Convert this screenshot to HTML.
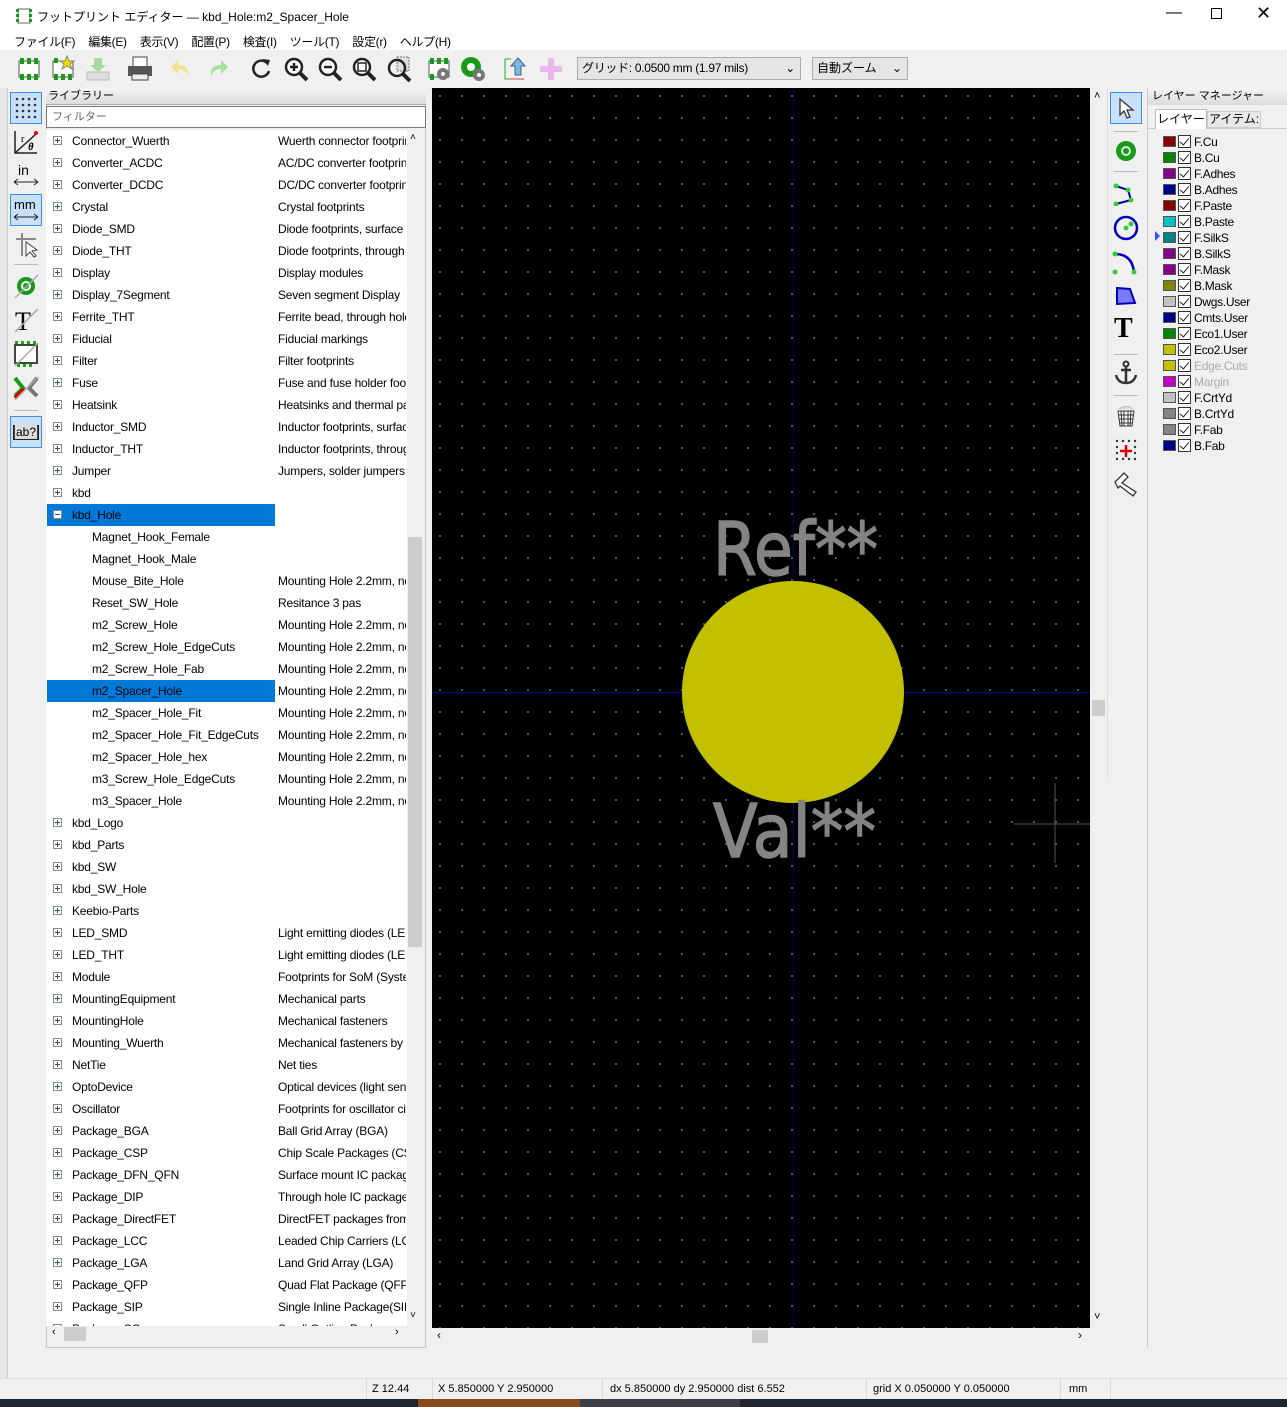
<!DOCTYPE html>
<html><head><meta charset="utf-8">
<style>
*{box-sizing:border-box;margin:0;padding:0}
body{width:1287px;height:1407px;background:#f0f0f0;font-family:"Liberation Sans","Noto Sans CJK JP",sans-serif;font-size:12px;color:#000;position:relative;overflow:hidden}
.abs{position:absolute}
.title{left:0;top:0;width:1287px;height:32px;background:#fff}
.menu{left:0;top:32px;width:1287px;height:18px;background:#fff}
.tb{left:0;top:50px;width:1287px;height:38px;background:#f0f0f0}
.ic{position:absolute;width:28px;height:28px}
.sep{position:absolute;width:1px;height:26px;background:#ccc;top:56px}
.list{left:46px;top:130px;width:362px;height:1196px;background:#fff;overflow:hidden;letter-spacing:-0.2px}
.row{position:relative;height:22px;line-height:22px;white-space:nowrap}
.row .pm{position:absolute;left:7px;top:6px;width:9px;height:9px;border:1px solid #8a8a8a;background:#fff}
.row .pm:before{content:"";position:absolute;left:1px;top:3px;width:5px;height:1px;background:#2a4aa0}
.row .pm.p:after{content:"";position:absolute;left:3px;top:1px;width:1px;height:5px;background:#2a4aa0}
.row .n{position:absolute;left:26px}
.row .c{position:absolute;left:46px}
.row .d{position:absolute;left:232px;width:128px;overflow:hidden}
.sel{position:absolute;left:1px;width:228px;height:22px;background:#0078d7}
.canvas{left:432px;top:88px;width:658px;height:1240px;background-color:#000;background-image:radial-gradient(circle at 1px 1px,#6a6a6a 0.8px,transparent 1.1px);background-size:22px 22px;background-position:7px 7px;overflow:hidden}
.lay{position:absolute;left:1163px;height:16px;line-height:16px;width:120px}
.lay .sw{position:absolute;left:0;top:2px;width:13px;height:11px;border:1px solid #555}
.lay .cb{position:absolute;left:15px;top:1px;width:13px;height:13px;border:1px solid #333;background:#fff}
.lay .cb:after{content:"";position:absolute;left:3px;top:0px;width:4px;height:8px;border-right:1.5px solid #222;border-bottom:1.5px solid #222;transform:rotate(40deg)}
.lay .t{position:absolute;left:31px;font-size:12px;letter-spacing:-0.3px}
.status{left:0;top:1378px;width:1287px;height:21px;background:#f0f0f0;border-top:1px solid #ddd}
.st{position:absolute;top:1383px;font-size:11px}
.vs{position:absolute;top:1379px;width:1px;height:20px;background:#d8d8d8}
</style></head><body>
<div class="abs title">
 <svg class="abs" style="left:16px;top:7px" width="16" height="18"><rect x="2" y="2" width="12" height="14" fill="#fff" stroke="#666"/><g fill="#1a9a1a"><rect x="0" y="2" width="3" height="3"/><rect x="0" y="7" width="3" height="3"/><rect x="0" y="12" width="3" height="3"/><rect x="13" y="2" width="3" height="3"/><rect x="13" y="7" width="3" height="3"/><rect x="13" y="12" width="3" height="3"/></g></svg>
 <div class="abs" style="left:37px;top:8px;font-size:12px">フットプリント エディター — kbd_Hole:m2_Spacer_Hole</div>
 <div class="abs" style="left:1166px;top:4px;font-size:16px">&#8212;</div>
 <div class="abs" style="left:1211px;top:8px;width:11px;height:11px;border:1px solid #000"></div>
 <div class="abs" style="left:1256px;top:3px;font-size:18px">&#x2715;</div>
</div>
<div class="abs menu"><div class="abs" style="left:14px;top:1px;font-size:12px;word-spacing:10px;letter-spacing:-0.3px">ファイル(F) 編集(E) 表示(V) 配置(P) 検査(I) ツール(T) 設定(r) ヘルプ(H)</div></div>
<div class="abs tb">
 <svg class="ic" style="left:15px;top:5px" viewBox="0 0 28 28"><rect x="4" y="6" width="20" height="16" fill="#fff" stroke="#555"/><g fill="#1a9a1a"><rect x="5" y="3" width="4" height="6"/><rect x="12" y="3" width="4" height="6"/><rect x="19" y="3" width="4" height="6"/><rect x="5" y="19" width="4" height="6"/><rect x="12" y="19" width="4" height="6"/><rect x="19" y="19" width="4" height="6"/></g></svg>
 <svg class="ic" style="left:49px;top:5px" viewBox="0 0 28 28"><rect x="4" y="6" width="20" height="16" fill="#fff" stroke="#555"/><g fill="#1a9a1a"><rect x="5" y="19" width="4" height="6"/><rect x="12" y="19" width="4" height="6"/><rect x="19" y="19" width="4" height="6"/><rect x="5" y="3" width="4" height="5"/></g><polygon points="18,1 20,6 25,6 21,9 23,14 18,11 13,14 15,9 11,6 16,6" fill="#f5d800" stroke="#886"/></svg>
 <svg class="ic" style="left:84px;top:5px" viewBox="0 0 28 28"><rect x="3" y="17" width="22" height="8" fill="#ddd" stroke="#bbb"/><polygon points="10,3 18,3 18,10 22,10 14,17 6,10 10,10" fill="#a8d8a0"/></svg>
 <div class="sep" style="left:119px"></div>
 <svg class="ic" style="left:126px;top:5px" viewBox="0 0 28 28"><rect x="7" y="2" width="14" height="10" fill="#fff" stroke="#444"/><rect x="2" y="11" width="24" height="10" fill="#555"/><rect x="6" y="19" width="16" height="6" fill="#eee" stroke="#444"/></svg>
 <div class="sep" style="left:160px"></div>
 <svg class="ic" style="left:168px;top:5px" viewBox="0 0 28 28"><path d="M20 22 Q22 10 10 10 L10 5 L3 12 L10 19 L10 14 Q18 14 20 22Z" fill="#f5e08a"/></svg>
 <svg class="ic" style="left:203px;top:5px" viewBox="0 0 28 28"><path d="M8 22 Q6 10 18 10 L18 5 L25 12 L18 19 L18 14 Q10 14 8 22Z" fill="#a8e0a0"/></svg>
 <div class="sep" style="left:237px"></div>
 <svg class="ic" style="left:247px;top:5px" viewBox="0 0 28 28"><path d="M20 8 A8 8 0 1 0 22 16" fill="none" stroke="#222" stroke-width="2.5"/><polygon points="16,4 23,5 21,11" fill="#222"/></svg>
 <svg class="ic" style="left:282px;top:5px" viewBox="0 0 28 28"><circle cx="12" cy="12" r="8" fill="#fff" stroke="#222" stroke-width="2.5"/><path d="M18 18 L25 25" stroke="#222" stroke-width="4"/><path d="M8 12H16M12 8V16" stroke="#222" stroke-width="2.5"/></svg>
 <svg class="ic" style="left:316px;top:5px" viewBox="0 0 28 28"><circle cx="12" cy="12" r="8" fill="#fff" stroke="#222" stroke-width="2.5"/><path d="M18 18 L25 25" stroke="#222" stroke-width="4"/><path d="M8 12H16" stroke="#222" stroke-width="2.5"/></svg>
 <svg class="ic" style="left:350px;top:5px" viewBox="0 0 28 28"><circle cx="12" cy="12" r="8" fill="#fff" stroke="#222" stroke-width="2.5"/><path d="M18 18 L25 25" stroke="#222" stroke-width="4"/><rect x="8" y="8" width="8" height="8" fill="none" stroke="#222" stroke-width="1.5"/></svg>
 <svg class="ic" style="left:385px;top:5px" viewBox="0 0 28 28"><rect x="12" y="2" width="12" height="14" fill="#ddd" stroke="#777" stroke-dasharray="2 1"/><circle cx="12" cy="13" r="8" fill="none" stroke="#222" stroke-width="2.5"/><path d="M18 19 L25 26" stroke="#222" stroke-width="4"/></svg>
 <div class="sep" style="left:420px"></div>
 <svg class="ic" style="left:425px;top:5px" viewBox="0 0 28 28"><rect x="4" y="6" width="20" height="16" fill="#fff" stroke="#555"/><g fill="#1a9a1a"><rect x="5" y="3" width="4" height="6"/><rect x="12" y="3" width="4" height="6"/><rect x="19" y="3" width="4" height="6"/><rect x="5" y="19" width="4" height="6"/></g><circle cx="18" cy="19" r="6" fill="#777"/><circle cx="18" cy="19" r="2" fill="#fff"/></svg>
 <svg class="ic" style="left:459px;top:5px" viewBox="0 0 28 28"><circle cx="12" cy="12" r="10" fill="#1a9a1a"/><circle cx="12" cy="12" r="4" fill="#fff"/><circle cx="20" cy="20" r="6" fill="#777"/><circle cx="20" cy="20" r="2" fill="#fff"/></svg>
 <div class="sep" style="left:494px"></div>
 <svg class="ic" style="left:502px;top:5px" viewBox="0 0 28 28"><path d="M3 4H9M3 4V24H9" stroke="#2a2" fill="none"/><polygon points="16,3 23,11 19,11 19,20 13,20 13,11 9,11" fill="#7ab8e8" stroke="#468"/><path d="M8 24H22" stroke="#c44"/></svg>
 <svg class="ic" style="left:537px;top:5px" viewBox="0 0 28 28"><path d="M14 3V25M3 14H25" stroke="#e8b8ec" stroke-width="6"/></svg>
 <div class="sep" style="left:570px"></div>
 <div class="abs" style="left:577px;top:7px;width:224px;height:23px;border:1px solid #adadad;background:#e5e5e5;line-height:21px;padding-left:4px;font-size:12px;letter-spacing:-0.3px">グリッド: 0.0500 mm (1.97 mils)<span class="abs" style="right:5px;top:0">&#8964;</span></div>
 <div class="abs" style="left:812px;top:7px;width:96px;height:23px;border:1px solid #adadad;background:#e5e5e5;line-height:21px;padding-left:4px;font-size:12px">自動ズーム<span class="abs" style="right:5px;top:0">&#8964;</span></div>
</div>

<!-- left toolbar -->
<div class="abs" style="left:8px;top:88px;width:36px;height:1290px;background:#f0f0f0"></div>
<div class="abs" style="left:0;top:88px;width:8px;height:1290px;background:#e8e8e8;border-right:1px solid #ccc"></div>
<div class="abs" style="left:10px;top:92px;width:32px;height:32px;background:#c8e0f8;border:1px solid #3a8ee6"></div>
<svg class="abs" style="left:14px;top:96px" width="24" height="24"><g fill="#333"><circle cx="3" cy="3" r="1.3"/><circle cx="9" cy="3" r="1.3"/><circle cx="15" cy="3" r="1.3"/><circle cx="21" cy="3" r="1.3"/><circle cx="3" cy="9" r="1.3"/><circle cx="9" cy="9" r="1.3"/><circle cx="15" cy="9" r="1.3"/><circle cx="21" cy="9" r="1.3"/><circle cx="3" cy="15" r="1.3"/><circle cx="9" cy="15" r="1.3"/><circle cx="15" cy="15" r="1.3"/><circle cx="21" cy="15" r="1.3"/><circle cx="3" cy="21" r="1.3"/><circle cx="9" cy="21" r="1.3"/><circle cx="15" cy="21" r="1.3"/><circle cx="21" cy="21" r="1.3"/></g></svg>
<svg class="abs" style="left:12px;top:128px" width="28" height="28"><path d="M3 3V25H25M3 25L24 6" stroke="#222" fill="none" stroke-width="1.5"/><circle cx="24" cy="5" r="2" fill="#e00"/><text x="9" y="14" font-size="10" font-family="Liberation Serif">r</text><text x="16" y="22" font-size="10" font-style="italic" font-weight="bold">θ</text></svg>
<div class="abs" style="left:18px;top:162px;font-size:14px">in</div>
<svg class="abs" style="left:12px;top:178px" width="28" height="8"><path d="M2 4H26M2 4L6 1M2 4L6 7M26 4L22 1M26 4L22 7" stroke="#222"/></svg>
<div class="abs" style="left:10px;top:194px;width:32px;height:32px;background:#c8e0f8;border:1px solid #3a8ee6"></div>
<div class="abs" style="left:14px;top:197px;font-size:13px">mm</div>
<svg class="abs" style="left:12px;top:213px" width="28" height="8"><path d="M2 4H26M2 4L6 1M2 4L6 7M26 4L22 1M26 4L22 7" stroke="#222"/></svg>
<svg class="abs" style="left:12px;top:230px" width="28" height="28"><path d="M4 9H24M10 3V26" stroke="#888" stroke-width="2"/><path d="M14 12L14 26L18 22L22 27L24 26L20 21L25 20Z" fill="#fff" stroke="#444"/></svg>
<div class="abs" style="left:14px;top:264px;width:24px;height:1px;background:#bbb"></div>
<svg class="abs" style="left:12px;top:272px" width="28" height="28"><circle cx="14" cy="14" r="9" fill="#1a9a1a"/><circle cx="14" cy="14" r="5" fill="#fff"/><circle cx="14" cy="14" r="3" fill="#1a9a1a"/><path d="M3 26L26 3" stroke="#aaa" stroke-width="1.5"/></svg>
<svg class="abs" style="left:12px;top:306px" width="28" height="28"><text x="3" y="24" font-size="26" font-family="Liberation Serif">T</text><path d="M3 26L26 3" stroke="#aaa" stroke-width="1.5"/></svg>
<svg class="abs" style="left:12px;top:340px" width="28" height="28"><rect x="3" y="5" width="22" height="18" fill="#fff" stroke="#444" stroke-width="2"/><g fill="#1a1"><rect x="3" y="1" width="3" height="3"/><rect x="9" y="1" width="3" height="3"/><rect x="15" y="1" width="3" height="3"/><rect x="21" y="1" width="3" height="3"/><rect x="5" y="24" width="3" height="3"/><rect x="11" y="24" width="3" height="3"/><rect x="17" y="24" width="3" height="3"/></g><path d="M3 26L26 3" stroke="#aaa" stroke-width="1.5"/></svg>
<svg class="abs" style="left:12px;top:374px" width="28" height="28"><path d="M3 4L11 14L3 22" stroke="#1a9a1a" stroke-width="4" fill="none"/><path d="M25 4L17 14L25 22" stroke="#777" stroke-width="4" fill="none"/><path d="M3 24L12 15" stroke="#d00" stroke-width="4"/><path d="M3 26L26 3" stroke="#aaa" stroke-width="1.5"/></svg>
<div class="abs" style="left:14px;top:410px;width:24px;height:1px;background:#bbb"></div>
<div class="abs" style="left:10px;top:416px;width:32px;height:32px;background:#c8e0f8;border:1px solid #3a8ee6"></div>
<div class="abs" style="left:13px;top:425px;width:26px;height:15px;background:#444;border:1px solid #222;color:#fff;font-size:12px;line-height:13px;text-align:center"><span style="background:#ddd;color:#000;padding:0 1px">ab?</span></div>

<!-- library panel -->
<div class="abs" style="left:46px;top:88px;width:380px;height:1260px;border:1px solid #c8c8c8;background:#f0f0f0"></div>
<div class="abs" style="left:46px;top:88px;width:380px;height:17px;background:linear-gradient(#f4f4f4,#dcdcdc);border-bottom:1px solid #aaa;font-size:11px;padding-left:2px;line-height:16px">ライブラリー</div>
<div class="abs" style="left:46px;top:106px;width:380px;height:22px;background:#fff;border:1px solid #7a7a7a;font-size:11px;line-height:20px;padding-left:5px;color:#666">フィルター</div>
<div class="abs list">
<div class="row"><span class="pm p"></span><span class="n">Connector_Wuerth</span><span class="d">Wuerth connector footprints</span></div>
<div class="row"><span class="pm p"></span><span class="n">Converter_ACDC</span><span class="d">AC/DC converter footprints</span></div>
<div class="row"><span class="pm p"></span><span class="n">Converter_DCDC</span><span class="d">DC/DC converter footprints</span></div>
<div class="row"><span class="pm p"></span><span class="n">Crystal</span><span class="d">Crystal footprints</span></div>
<div class="row"><span class="pm p"></span><span class="n">Diode_SMD</span><span class="d">Diode footprints, surface</span></div>
<div class="row"><span class="pm p"></span><span class="n">Diode_THT</span><span class="d">Diode footprints, through</span></div>
<div class="row"><span class="pm p"></span><span class="n">Display</span><span class="d">Display modules</span></div>
<div class="row"><span class="pm p"></span><span class="n">Display_7Segment</span><span class="d">Seven segment Display</span></div>
<div class="row"><span class="pm p"></span><span class="n">Ferrite_THT</span><span class="d">Ferrite bead, through hole</span></div>
<div class="row"><span class="pm p"></span><span class="n">Fiducial</span><span class="d">Fiducial markings</span></div>
<div class="row"><span class="pm p"></span><span class="n">Filter</span><span class="d">Filter footprints</span></div>
<div class="row"><span class="pm p"></span><span class="n">Fuse</span><span class="d">Fuse and fuse holder footprints</span></div>
<div class="row"><span class="pm p"></span><span class="n">Heatsink</span><span class="d">Heatsinks and thermal pads</span></div>
<div class="row"><span class="pm p"></span><span class="n">Inductor_SMD</span><span class="d">Inductor footprints, surface</span></div>
<div class="row"><span class="pm p"></span><span class="n">Inductor_THT</span><span class="d">Inductor footprints, through</span></div>
<div class="row"><span class="pm p"></span><span class="n">Jumper</span><span class="d">Jumpers, solder jumpers,</span></div>
<div class="row"><span class="pm p"></span><span class="n">kbd</span></div>
<div class="row"><span class="sel"></span><span class="pm"></span><span class="n">kbd_Hole</span></div>
<div class="row"><span class="c">Magnet_Hook_Female</span></div>
<div class="row"><span class="c">Magnet_Hook_Male</span></div>
<div class="row"><span class="c">Mouse_Bite_Hole</span><span class="d">Mounting Hole 2.2mm, no</span></div>
<div class="row"><span class="c">Reset_SW_Hole</span><span class="d">Resitance 3 pas</span></div>
<div class="row"><span class="c">m2_Screw_Hole</span><span class="d">Mounting Hole 2.2mm, no</span></div>
<div class="row"><span class="c">m2_Screw_Hole_EdgeCuts</span><span class="d">Mounting Hole 2.2mm, no</span></div>
<div class="row"><span class="c">m2_Screw_Hole_Fab</span><span class="d">Mounting Hole 2.2mm, no</span></div>
<div class="row"><span class="sel"></span><span class="c">m2_Spacer_Hole</span><span class="d">Mounting Hole 2.2mm, no</span></div>
<div class="row"><span class="c">m2_Spacer_Hole_Fit</span><span class="d">Mounting Hole 2.2mm, no</span></div>
<div class="row"><span class="c">m2_Spacer_Hole_Fit_EdgeCuts</span><span class="d">Mounting Hole 2.2mm, no</span></div>
<div class="row"><span class="c">m2_Spacer_Hole_hex</span><span class="d">Mounting Hole 2.2mm, no</span></div>
<div class="row"><span class="c">m3_Screw_Hole_EdgeCuts</span><span class="d">Mounting Hole 2.2mm, no</span></div>
<div class="row"><span class="c">m3_Spacer_Hole</span><span class="d">Mounting Hole 2.2mm, no</span></div>
<div class="row"><span class="pm p"></span><span class="n">kbd_Logo</span></div>
<div class="row"><span class="pm p"></span><span class="n">kbd_Parts</span></div>
<div class="row"><span class="pm p"></span><span class="n">kbd_SW</span></div>
<div class="row"><span class="pm p"></span><span class="n">kbd_SW_Hole</span></div>
<div class="row"><span class="pm p"></span><span class="n">Keebio-Parts</span></div>
<div class="row"><span class="pm p"></span><span class="n">LED_SMD</span><span class="d">Light emitting diodes (LED)</span></div>
<div class="row"><span class="pm p"></span><span class="n">LED_THT</span><span class="d">Light emitting diodes (LED)</span></div>
<div class="row"><span class="pm p"></span><span class="n">Module</span><span class="d">Footprints for SoM (System</span></div>
<div class="row"><span class="pm p"></span><span class="n">MountingEquipment</span><span class="d">Mechanical parts</span></div>
<div class="row"><span class="pm p"></span><span class="n">MountingHole</span><span class="d">Mechanical fasteners</span></div>
<div class="row"><span class="pm p"></span><span class="n">Mounting_Wuerth</span><span class="d">Mechanical fasteners by</span></div>
<div class="row"><span class="pm p"></span><span class="n">NetTie</span><span class="d">Net ties</span></div>
<div class="row"><span class="pm p"></span><span class="n">OptoDevice</span><span class="d">Optical devices (light sensors</span></div>
<div class="row"><span class="pm p"></span><span class="n">Oscillator</span><span class="d">Footprints for oscillator ci</span></div>
<div class="row"><span class="pm p"></span><span class="n">Package_BGA</span><span class="d">Ball Grid Array (BGA)</span></div>
<div class="row"><span class="pm p"></span><span class="n">Package_CSP</span><span class="d">Chip Scale Packages (CSP)</span></div>
<div class="row"><span class="pm p"></span><span class="n">Package_DFN_QFN</span><span class="d">Surface mount IC packages</span></div>
<div class="row"><span class="pm p"></span><span class="n">Package_DIP</span><span class="d">Through hole IC packages</span></div>
<div class="row"><span class="pm p"></span><span class="n">Package_DirectFET</span><span class="d">DirectFET packages from</span></div>
<div class="row"><span class="pm p"></span><span class="n">Package_LCC</span><span class="d">Leaded Chip Carriers (LCC)</span></div>
<div class="row"><span class="pm p"></span><span class="n">Package_LGA</span><span class="d">Land Grid Array (LGA)</span></div>
<div class="row"><span class="pm p"></span><span class="n">Package_QFP</span><span class="d">Quad Flat Package (QFP)</span></div>
<div class="row"><span class="pm p"></span><span class="n">Package_SIP</span><span class="d">Single Inline Package(SIP)</span></div>
<div class="row"><span class="pm p"></span><span class="n">Package_SO</span><span class="d">Small Outline Packages</span></div>
</div>
<div class="abs" style="left:407px;top:130px;width:16px;height:1196px;background:#f0f0f0"></div>
<div class="abs" style="left:408px;top:537px;width:14px;height:410px;background:#cdcdcd"></div>
<div class="abs" style="left:410px;top:132px;font-size:10px">&#708;</div>
<div class="abs" style="left:410px;top:1310px;font-size:10px">&#709;</div>
<div class="abs" style="left:47px;top:1326px;width:376px;height:16px;background:#f0f0f0"></div>
<div class="abs" style="left:64px;top:1327px;width:22px;height:14px;background:#cdcdcd"></div>
<div class="abs" style="left:52px;top:1326px;font-size:11px">&#8249;</div>
<div class="abs" style="left:395px;top:1326px;font-size:11px">&#8250;</div>

<!-- canvas -->
<div class="abs canvas">
 <svg width="658" height="1240" style="position:absolute;left:0;top:0">
  <line x1="361.5" y1="0" x2="361.5" y2="1240" stroke="#0000a8" stroke-width="1" opacity="0.6"/>
  <line x1="0" y1="604.5" x2="658" y2="604.5" stroke="#0000a8" stroke-width="1"/>
  <circle cx="361" cy="604" r="111" fill="#c2c000"/>
  <text x="281" y="487" font-family="DejaVu Sans" font-size="74" fill="#848484" stroke="#848484" stroke-width="1.5" textLength="165" lengthAdjust="spacingAndGlyphs">Ref**</text>
  <text x="281" y="769" font-family="DejaVu Sans" font-size="74" fill="#848484" stroke="#848484" stroke-width="1.5" textLength="163" lengthAdjust="spacingAndGlyphs">Val**</text>
  <path d="M623 695V775M582 736H658" stroke="#555" stroke-width="1"/>
 </svg>
</div>
<!-- canvas scrollbars -->
<div class="abs" style="left:1090px;top:88px;width:17px;height:1240px;background:#f0f0f0"></div>
<div class="abs" style="left:1092px;top:700px;width:13px;height:16px;background:#cdcdcd"></div>
<div class="abs" style="left:1094px;top:90px;font-size:11px">&#708;</div>
<div class="abs" style="left:1094px;top:1311px;font-size:11px">&#709;</div>
<div class="abs" style="left:432px;top:1328px;width:658px;height:17px;background:#f0f0f0"></div>
<div class="abs" style="left:752px;top:1330px;width:16px;height:13px;background:#cdcdcd"></div>
<div class="abs" style="left:437px;top:1328px;font-size:12px">&#8249;</div>
<div class="abs" style="left:1078px;top:1328px;font-size:12px">&#8250;</div>

<!-- right toolbar -->
<div class="abs" style="left:1110px;top:92px;width:32px;height:32px;background:#c8e0f8;border:1px solid #3a8ee6"></div>
<svg class="abs" style="left:1116px;top:97px" width="20" height="22"><path d="M4 2V18L8 14L11 21L14 20L11 13L17 13Z" fill="#fff" stroke="#333" stroke-width="1.3"/></svg>
<div class="abs" style="left:1114px;top:131px;width:24px;height:1px;background:#bbb"></div>
<svg class="abs" style="left:1114px;top:139px" width="24" height="24"><circle cx="12" cy="12" r="10" fill="#1a9a1a"/><circle cx="12" cy="12" r="5" fill="#d8efd8"/><circle cx="12" cy="12" r="3" fill="#1a9a1a"/></svg>
<div class="abs" style="left:1114px;top:171px;width:24px;height:1px;background:#bbb"></div>
<svg class="abs" style="left:1112px;top:182px" width="28" height="24"><path d="M4 4L16 8L19 18L4 22" stroke="#0000a8" stroke-width="2" fill="none"/><g fill="#3c3"><circle cx="4" cy="4" r="2.5"/><circle cx="16" cy="8" r="2.5"/><circle cx="19" cy="18" r="2.5"/><circle cx="4" cy="22" r="2.5"/></g></svg>
<svg class="abs" style="left:1112px;top:214px" width="28" height="28"><circle cx="14" cy="14" r="11" fill="none" stroke="#0000c0" stroke-width="2.5"/><circle cx="14" cy="14" r="2.5" fill="#3c3"/><circle cx="19" cy="10" r="2.5" fill="#3c3"/></svg>
<svg class="abs" style="left:1112px;top:250px" width="28" height="26"><path d="M3 4Q20 4 22 22" stroke="#0000c0" stroke-width="2.5" fill="none"/><g fill="#3c3"><circle cx="3" cy="4" r="2.5"/><circle cx="3" cy="22" r="2.5"/><circle cx="22" cy="22" r="2.5"/></g></svg>
<svg class="abs" style="left:1114px;top:285px" width="24" height="22"><polygon points="3,3 16,4 21,18 3,19" fill="#7a7aff" stroke="#0000b0" stroke-width="2"/></svg>
<div class="abs" style="left:1114px;top:313px;font-family:'Liberation Serif',serif;font-size:28px;line-height:32px;font-weight:bold">T</div>
<div class="abs" style="left:1114px;top:354px;width:24px;height:1px;background:#bbb"></div>
<svg class="abs" style="left:1113px;top:360px" width="26" height="26"><circle cx="13" cy="4" r="2.5" fill="none" stroke="#333" stroke-width="2"/><path d="M13 6V23M8 10H18M3 15Q5 23 13 23Q21 23 23 15" stroke="#333" stroke-width="2.5" fill="none"/></svg>
<div class="abs" style="left:1114px;top:395px;width:24px;height:1px;background:#bbb"></div>
<svg class="abs" style="left:1114px;top:402px" width="24" height="26"><path d="M4 9H20L18 24H6Z" fill="#fff" stroke="#333"/><path d="M7 9L8 24M10 9V24M14 9V24M17 9L16 24M5 13H19M5 17H19M6 21H18" stroke="#333" stroke-width="1"/><path d="M5 7Q12 2 19 7" fill="#ddd" stroke="#bbb"/></svg>
<svg class="abs" style="left:1114px;top:438px" width="24" height="24"><g fill="#333"><circle cx="3" cy="3" r="1.2"/><circle cx="9" cy="3" r="1.2"/><circle cx="15" cy="3" r="1.2"/><circle cx="21" cy="3" r="1.2"/><circle cx="3" cy="9" r="1.2"/><circle cx="21" cy="9" r="1.2"/><circle cx="3" cy="15" r="1.2"/><circle cx="21" cy="15" r="1.2"/><circle cx="3" cy="21" r="1.2"/><circle cx="9" cy="21" r="1.2"/><circle cx="15" cy="21" r="1.2"/><circle cx="21" cy="21" r="1.2"/></g><path d="M12 7V19M6 13H18" stroke="#d00" stroke-width="2.5"/></svg>
<svg class="abs" style="left:1112px;top:470px" width="28" height="28"><path d="M3 12L12 3L16 7L10 13L24 22L21 26L8 16L6 18Z" fill="#fff" stroke="#333" stroke-width="1.3"/></svg>
<div class="abs" style="left:1107px;top:88px;width:1px;height:690px;background:#ddd"></div>

<!-- layer manager -->
<div class="abs" style="left:1147px;top:88px;width:140px;height:1260px;background:#f0f0f0;border-left:1px solid #ccc"></div>
<div class="abs" style="left:1148px;top:88px;width:139px;height:17px;background:linear-gradient(#f4f4f4,#dcdcdc);font-size:11px;padding-left:4px;line-height:16px">レイヤー マネージャー</div>
<div class="abs" style="left:1148px;top:128px;width:139px;height:1220px;border-top:1px solid #ccc"></div>
<div class="abs" style="left:1155px;top:109px;width:52px;height:20px;background:#fff;border:1px solid #bbb;border-bottom:none;font-size:12px;line-height:18px;text-align:center">レイヤー</div>
<div class="abs" style="left:1207px;top:111px;width:54px;height:17px;background:#e8e8e8;border:1px solid #ccc;font-size:12px;line-height:15px;text-align:center">アイテム:</div>
<div class="lay" style="top:134px"><span class="sw" style="background:#840000"></span><span class="cb"></span><span class="t">F.Cu</span></div>
<div class="lay" style="top:150px"><span class="sw" style="background:#008400"></span><span class="cb"></span><span class="t">B.Cu</span></div>
<div class="lay" style="top:166px"><span class="sw" style="background:#840084"></span><span class="cb"></span><span class="t">F.Adhes</span></div>
<div class="lay" style="top:182px"><span class="sw" style="background:#000084"></span><span class="cb"></span><span class="t">B.Adhes</span></div>
<div class="lay" style="top:198px"><span class="sw" style="background:#840000"></span><span class="cb"></span><span class="t">F.Paste</span></div>
<div class="lay" style="top:214px"><span class="sw" style="background:#00c2c2"></span><span class="cb"></span><span class="t">B.Paste</span></div>
<div class="lay" style="top:230px"><span class="sw" style="background:#008484"></span><span class="cb"></span><span class="t">F.SilkS</span></div>
<div class="abs" style="left:1155px;top:231px;width:0;height:0;border-left:5px solid #3050ff;border-top:5px solid transparent;border-bottom:5px solid transparent"></div>
<div class="lay" style="top:246px"><span class="sw" style="background:#840084"></span><span class="cb"></span><span class="t">B.SilkS</span></div>
<div class="lay" style="top:262px"><span class="sw" style="background:#840084"></span><span class="cb"></span><span class="t">F.Mask</span></div>
<div class="lay" style="top:278px"><span class="sw" style="background:#848400"></span><span class="cb"></span><span class="t">B.Mask</span></div>
<div class="lay" style="top:294px"><span class="sw" style="background:#c2c2c2"></span><span class="cb"></span><span class="t">Dwgs.User</span></div>
<div class="lay" style="top:310px"><span class="sw" style="background:#000084"></span><span class="cb"></span><span class="t">Cmts.User</span></div>
<div class="lay" style="top:326px"><span class="sw" style="background:#008400"></span><span class="cb"></span><span class="t">Eco1.User</span></div>
<div class="lay" style="top:342px"><span class="sw" style="background:#c2c200"></span><span class="cb"></span><span class="t">Eco2.User</span></div>
<div class="lay" style="top:358px"><span class="sw" style="background:#c2c200"></span><span class="cb"></span><span class="t" style="color:#aaa">Edge.Cuts</span></div>
<div class="lay" style="top:374px"><span class="sw" style="background:#c200c2"></span><span class="cb"></span><span class="t" style="color:#aaa">Margin</span></div>
<div class="lay" style="top:390px"><span class="sw" style="background:#c2c2c2"></span><span class="cb"></span><span class="t">F.CrtYd</span></div>
<div class="lay" style="top:406px"><span class="sw" style="background:#848484"></span><span class="cb"></span><span class="t">B.CrtYd</span></div>
<div class="lay" style="top:422px"><span class="sw" style="background:#848484"></span><span class="cb"></span><span class="t">F.Fab</span></div>
<div class="lay" style="top:438px"><span class="sw" style="background:#000084"></span><span class="cb"></span><span class="t">B.Fab</span></div>

<!-- status -->
<div class="abs status"></div>
<div class="vs" style="left:366px"></div><div class="vs" style="left:432px"></div><div class="vs" style="left:602px"></div><div class="vs" style="left:866px"></div><div class="vs" style="left:1060px"></div><div class="vs" style="left:1110px"></div>
<div class="st" style="left:372px">Z 12.44</div>
<div class="st" style="left:438px">X 5.850000  Y 2.950000</div>
<div class="st" style="left:610px">dx 5.850000  dy 2.950000  dist 6.552</div>
<div class="st" style="left:873px">grid X 0.050000  Y 0.050000</div>
<div class="st" style="left:1069px">mm</div>
<div class="abs" style="left:0;top:1399px;width:1287px;height:8px;background:#1f2530"></div>
<div class="abs" style="left:418px;top:1399px;width:162px;height:8px;background:#8a4a1e"></div>
<div class="abs" style="left:580px;top:1399px;width:160px;height:8px;background:#3a3f48"></div>
</body></html>
